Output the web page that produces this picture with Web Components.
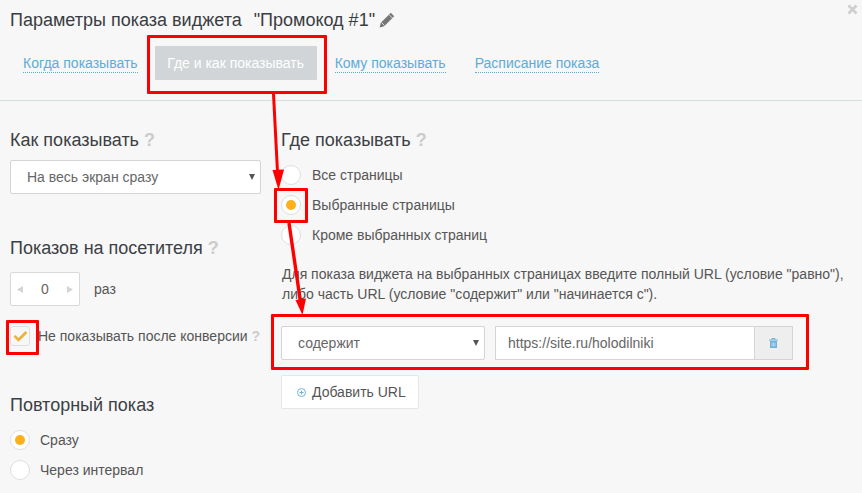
<!DOCTYPE html>
<html><head><meta charset="utf-8">
<style>
html,body{margin:0;padding:0;background:#f7f7f7;}
body{width:862px;height:493px;overflow:hidden;position:relative;font:14px/20px "Liberation Sans",Arial,sans-serif;color:#444;}
</style></head><body>
<template id="t-radio"><style>
:host{display:flex;align-items:center;height:20px;gap:var(--radio-gap,11px);white-space:nowrap;color:#555}
i{width:18px;height:18px;border:1px solid #dbe0e2;border-radius:50%;background:#fff;display:flex;align-items:center;justify-content:center;flex:none}
:host([checked]) i::after{content:"";width:10px;height:10px;border-radius:50%;background:#fdb01a}
</style><i></i><slot></slot></template>

<template id="t-help"><style>
:host{display:inline-block;color:#ccc;font-weight:700;}
</style>?</template>

<template id="t-h"><style>
:host{display:block;font-size:18px;line-height:20px;color:#3c3f44;white-space:nowrap}
</style><slot></slot></template>

<template id="t-select"><style>
:host{display:flex;align-items:center;box-sizing:border-box;height:34px;background:#fff;border:1px solid #d4d4d4;border-radius:2px;padding-left:16px;color:#666;position:relative}
svg{position:absolute;right:5px;top:13px}
</style><slot></slot><svg width="6" height="6"><path d="M0 0H6L3 6Z" fill="#555"/></svg></template>

<template id="t-tabs"><style>
:host{display:flex;align-items:center;height:34px;padding-left:23px;}
::slotted(a){color:#5eabd9;border-bottom:1px dotted #5eabd9;line-height:17px;margin-top:1px;white-space:nowrap}
::slotted(b){font-weight:400;color:#fff;background:#d1d5d7;height:34px;line-height:34px;width:162px;text-align:center;border-radius:1px;margin:0 18px 0 17px;white-space:nowrap}
</style><slot></slot></template>

<template id="t-header"><style>
:host{display:block;height:101px;box-sizing:border-box;border-bottom:1px solid #d3dcdf;position:relative}
.title{font-size:18px;line-height:20px;color:#3a3d42;padding:10px 0 0 10px;white-space:nowrap;display:flex;align-items:center;height:20px}
.title span{margin-left:12px}
.title svg{margin-left:4px}
.x{position:absolute;right:4px;top:4px}
.tabs{display:block;margin-top:16px}
</style><div class="title">Параметры показа виджета<span>"Промокод #1"</span>
<svg width="16" height="16" viewBox="0 0 16 16"><path d="M11.800 .8 15.200 4.200 5.200 14.200.6 15.400 1.800 10.800Z" fill="#777"/><path d="M10 2.600 13.400 6M2.600 10.600 5.400 13.400" stroke="#f7f7f7" stroke-width=".8"/></svg></div>
<svg class="x" width="11" height="11" viewBox="0 0 11 11"><path d="M1.500 1.500 9.500 9.500M9.500 1.500 1.500 9.500" stroke="#cfcfcf" stroke-width="2.800"/></svg>
<div class="tabs"><slot></slot></div></template>

<template id="t-spinner"><style>
:host{display:flex;align-items:center;justify-content:space-between;box-sizing:border-box;width:70px;height:34px;background:#fff;border:1px solid #d9d9d9;border-radius:2px;padding:0 6px;color:#666}
</style><svg width="6" height="7"><path d="M6 0V7L0 3.500Z" fill="#d4d4d4"/></svg><slot></slot><svg width="6" height="7"><path d="M0 0V7L6 3.500Z" fill="#d4d4d4"/></svg></template>

<template id="t-check"><style>
:host{display:flex;align-items:center;height:20px;white-space:nowrap;color:#555}
i{width:18px;height:18px;border:1px solid #dedede;border-radius:3px;background:#f7f7f7;flex:none;margin-right:8px;display:block}
svg{display:block;margin:2px}
</style><i><svg width="15" height="14" viewBox="0 0 15 14"><path d="M1.500 6.800 5.500 10.800 13.500 3" fill="none" stroke="#ecb23c" stroke-width="2.600"/></svg></i><slot></slot></template>

<template id="t-urlrow"><style>
:host{display:flex;height:34px}
.sel{width:204px;margin-right:10px}
.inp{box-sizing:border-box;width:259px;height:34px;background:#fff;border:1px solid #d4d4d4;border-right:0;padding-left:12px;line-height:32px;color:#666;white-space:nowrap}
.del{box-sizing:border-box;width:39px;height:34px;background:#eee;border:1px solid #d4d4d4;display:flex;align-items:center;justify-content:center}
</style><x-select class="sel">содержит</x-select><div class="inp">https://site.ru/holodilniki</div>
<div class="del"><svg width="9" height="10" viewBox="0 0 9 10"><path d="M0 2H9M3 2V.5H6V2" fill="none" stroke="#6db2dc"/><path d="M1 3H8V10H1Z" fill="#6db2dc"/><path d="M3 4.500V8.500M4.500 4.500V8.500M6 4.500V8.500" stroke="#eee" stroke-width=".6"/></svg></div></template>

<template id="t-add"><style>
:host{display:inline-flex;align-items:center;box-sizing:border-box;width:138px;height:34px;background:#fff;border:1px solid #e6e6e6;border-radius:2px;padding-left:15px;color:#555;white-space:nowrap;gap:6px}
</style><svg width="9" height="9" viewBox="0 0 9 9"><circle cx="4.500" cy="4.500" r="4" fill="none" stroke="#6db2dc"/><path d="M4.500 2.500V6.500M2.500 4.500H6.500" stroke="#6db2dc"/></svg><slot></slot></template>

<template id="t-mark"><style>
:host{position:absolute;box-sizing:border-box;border:3.500px solid #f00;border-radius:1px;display:block}
</style></template>

<template id="t-overlay"><style>
:host{position:absolute;inset:0;display:block;pointer-events:none}
svg{position:absolute;left:0;top:0}
</style><slot></slot><svg width="862" height="493"><g stroke="#f00" stroke-width="3" fill="#f00"><path d="M273.500 94 277.500 172"/><path d="M272.500 170 284 169.500 278.500 190Z" stroke="none"/><path d="M289 223 300.500 302" stroke-width="3.400"/><path d="M295.500 300 306 298.500 302.500 315Z" stroke="none"/></g></svg></template>

<template id="t-app"><style>
:host{display:block;width:862px;height:493px}
.cols{display:flex}
.l{width:251px;margin-left:10px;padding-top:29px;flex:none;--radio-gap:10px}
.r{margin-left:21px;padding-top:29px;width:570px}
.row{display:flex;align-items:center;gap:14px;color:#555}
.radios{display:flex;flex-direction:column;gap:10px}
p{margin:0;color:#555;white-space:nowrap}
</style>
<x-header><x-tabs><a>Когда показывать</a><b>Где и как показывать</b><a>Кому показывать</a><a style="margin-left:29px">Расписание показа</a></x-tabs></x-header>
<div class="cols">
<div class="l">
<x-h>Как показывать <x-help></x-help></x-h>
<x-select style="margin-top:10px">На весь экран сразу</x-select>
<x-h style="margin-top:44px">Показов на посетителя <x-help></x-help></x-h>
<div class="row" style="margin-top:14px"><x-spinner>0</x-spinner>раз</div>
<x-check style="margin-top:20px">Не показывать после конверсии&nbsp;<x-help style="font-size:14px"></x-help></x-check>
<x-h style="margin-top:49px">Повторный показ</x-h>
<div class="radios" style="margin-top:15px"><x-radio checked>Сразу</x-radio><x-radio>Через интервал</x-radio></div>
</div>
<div class="r">
<x-h style="margin-left:-1px">Где показывать <x-help></x-help></x-h>
<div class="radios" style="margin:15px 0 0 -1px"><x-radio>Все страницы</x-radio><x-radio checked>Выбранные страницы</x-radio><x-radio>Кроме выбранных страниц</x-radio></div>
<p style="margin-top:19px">Для показа виджета на выбранных страницах введите полный URL (условие "равно"),<br>либо часть URL (условие "содержит" или "начинается с").</p>
<x-urlrow style="margin:22px 0 0 -1px"></x-urlrow>
<x-add style="margin:15px 0 0 -1px">Добавить URL</x-add>
</div>
</div>
<x-overlay>
<x-mark style="left:147px;top:35px;width:180px;height:59px"></x-mark>
<x-mark style="left:274px;top:188px;width:34px;height:35px"></x-mark>
<x-mark style="left:6px;top:320px;width:33px;height:35px"></x-mark>
<x-mark style="left:271px;top:314px;width:538px;height:56px"></x-mark>
</x-overlay>
</template>
<x-app></x-app>
<script>
const tags={'x-radio':'t-radio','x-help':'t-help','x-h':'t-h','x-select':'t-select','x-tabs':'t-tabs','x-header':'t-header','x-spinner':'t-spinner','x-check':'t-check','x-urlrow':'t-urlrow','x-add':'t-add','x-mark':'t-mark','x-overlay':'t-overlay','x-app':'t-app'};
for(const [tag,id] of Object.entries(tags)){
  customElements.define(tag,class extends HTMLElement{
    constructor(){super();this.attachShadow({mode:'open'}).appendChild(document.getElementById(id).content.cloneNode(true));}
  });
}
</script>
</body></html>
